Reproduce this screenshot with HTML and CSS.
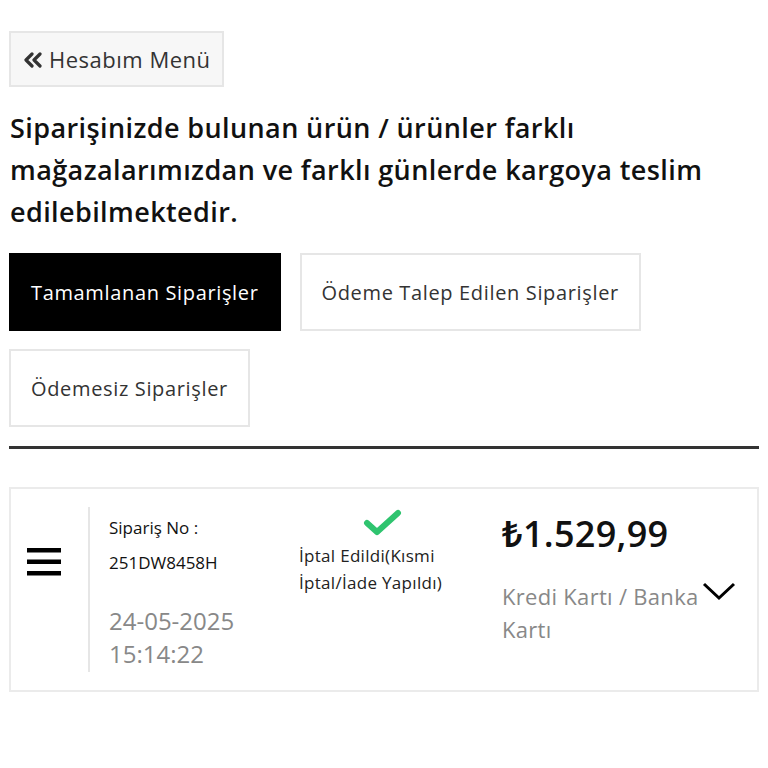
FILE: index.html
```html
<!DOCTYPE html>
<html lang="tr">
<head>
    <meta charset="UTF-8">
    <meta name="viewport" content="width=device-width, initial-scale=1.0">
    <title>Siparişlerim</title>
    <link rel="stylesheet" href="styles.css">
</head>
<body>

    <div class="page">
        <!-- Geri butonu -->
        <a class="back-btn" href="#">
            <svg class="back-icon" viewBox="0 0 20 16" width="20" height="16">
                <path d="M9 2 L3 8 L9 14" fill="none" stroke="#333" stroke-width="3.2" stroke-linecap="round" stroke-linejoin="round"/>
                <path d="M17 2 L11 8 L17 14" fill="none" stroke="#333" stroke-width="3.2" stroke-linecap="round" stroke-linejoin="round"/>
            </svg>
            Hesabım Menü
        </a>

        <h2 class="notice">Siparişinizde bulunan ürün / ürünler farklı mağazalarımızdan ve farklı günlerde kargoya teslim edilebilmektedir.</h2>

        <!-- Sekmeler -->
        <div class="tabs">
            <button class="tab active">Tamamlanan Siparişler</button>
            <button class="tab">Ödeme Talep Edilen Siparişler</button>
            <button class="tab">Ödemesiz Siparişler</button>
        </div>

        <hr class="divider">

        <!-- Sipariş kartı -->
        <div class="order-card">
            <div class="order-menu">
                <svg viewBox="0 0 34 30" width="34" height="30">
                    <rect x="0" y="1" width="34" height="4.5" fill="#000"/>
                    <rect x="0" y="12.5" width="34" height="4.5" fill="#000"/>
                    <rect x="0" y="24" width="34" height="4.5" fill="#000"/>
                </svg>
            </div>
            <div class="order-info">
                <div class="order-label">Sipariş No :</div>
                <div class="order-no">251DW8458H</div>
                <div class="order-date">24-05-2025<br>15:14:22</div>
            </div>
            <div class="order-status">
                <svg class="check" viewBox="0 0 40 28" width="40" height="28">
                    <path d="M4 14 L14 23 L35 4" fill="none" stroke="#2fc46f" stroke-width="6" stroke-linecap="round" stroke-linejoin="round"/>
                </svg>
                <div class="status-text">İptal Edildi(Kısmi İptal/İade Yapıldı)</div>
            </div>
            <div class="order-price">
                <div class="price">₺1.529,99</div>
                <div class="payment">Kredi Kartı / Banka Kartı</div>
            </div>
            <div class="order-toggle">
                <svg viewBox="0 0 34 20" width="34" height="20">
                    <path d="M2 3 L17 17 L32 3" fill="none" stroke="#000" stroke-width="3"/>
                </svg>
            </div>
        </div>
    </div>

</body>
</html>
```

FILE: styles.css
```css
body {
    font-family: "Open Sans", "Noto Sans", sans-serif;
    background-color: #fff;
    color: #222;
    margin: 0;
    padding: 31px 9px 0 9px;
}

.page {
    width: 750px;
}

.back-btn {
    display: inline-flex;
    align-items: center;
    gap: 6px;
    height: 56px;
    padding: 0 11px 0 12px;
    box-sizing: border-box;
    background-color: #f7f7f7;
    border: 2px solid #e6e6e6;
    color: #333;
    font-size: 22px;
    letter-spacing: 0.5px;
    text-decoration: none;
}

.back-icon {
    margin-top: 2px;
}

.notice {
    font-size: 27px;
    font-weight: 600;
    line-height: 42px;
    color: #111;
    margin: 20px 0 20px 1px;
    letter-spacing: 0.4px;
}

.tabs {
    display: flex;
    flex-wrap: wrap;
    gap: 18px 19px;
    width: 680px;
}

.tab {
    font-family: inherit;
    height: 78px;
    padding: 0 20px;
    font-size: 20px;
    letter-spacing: 0.65px;
    color: #333;
    background-color: #fff;
    border: 2px solid #e6e6e6;
    cursor: pointer;
}

.tab.active {
    background-color: #000;
    border-color: #000;
    color: #fff;
}

.divider {
    border: none;
    border-top: 3px solid #333;
    margin: 19px 0 38px 0;
}

.order-card {
    display: flex;
    border: 2px solid #ebebeb;
    height: 205px;
    box-sizing: border-box;
    padding: 18px 20px 18px 0;
}

.order-menu {
    width: 61px;
    padding-left: 16px;
    padding-top: 40px;
    border-right: 2px solid #e6e6e6;
}

.order-info {
    width: 190px;
    padding-left: 19px;
    padding-top: 9px;
}

.order-label {
    font-size: 17px;
    color: #111;
}

.order-no {
    font-size: 17px;
    color: #111;
    margin-top: 12px;
}

.order-date {
    font-size: 24px;
    color: #888;
    line-height: 33px;
    margin-top: 30px;
}

.order-status {
    width: 200px;
    display: flex;
    flex-direction: column;
    align-items: center;
}

.check {
    margin-left: -33px;
    margin-top: 2px;
}

.status-text {
    font-size: 17px;
    letter-spacing: 0.3px;
    color: #222;
    line-height: 27px;
    width: 162px;
    margin-top: 5px;
    margin-left: -38px;
}

.order-price {
    width: 200px;
    padding-top: 2px;
    padding-left: 3px;
}

.price {
    font-size: 36px;
    font-weight: 600;
    letter-spacing: 0.3px;
    color: #111;
}

.payment {
    font-size: 22px;
    letter-spacing: 0.3px;
    color: #888;
    line-height: 33px;
    margin-top: 22px;
}

.order-toggle {
    padding-top: 74px;
}
```
